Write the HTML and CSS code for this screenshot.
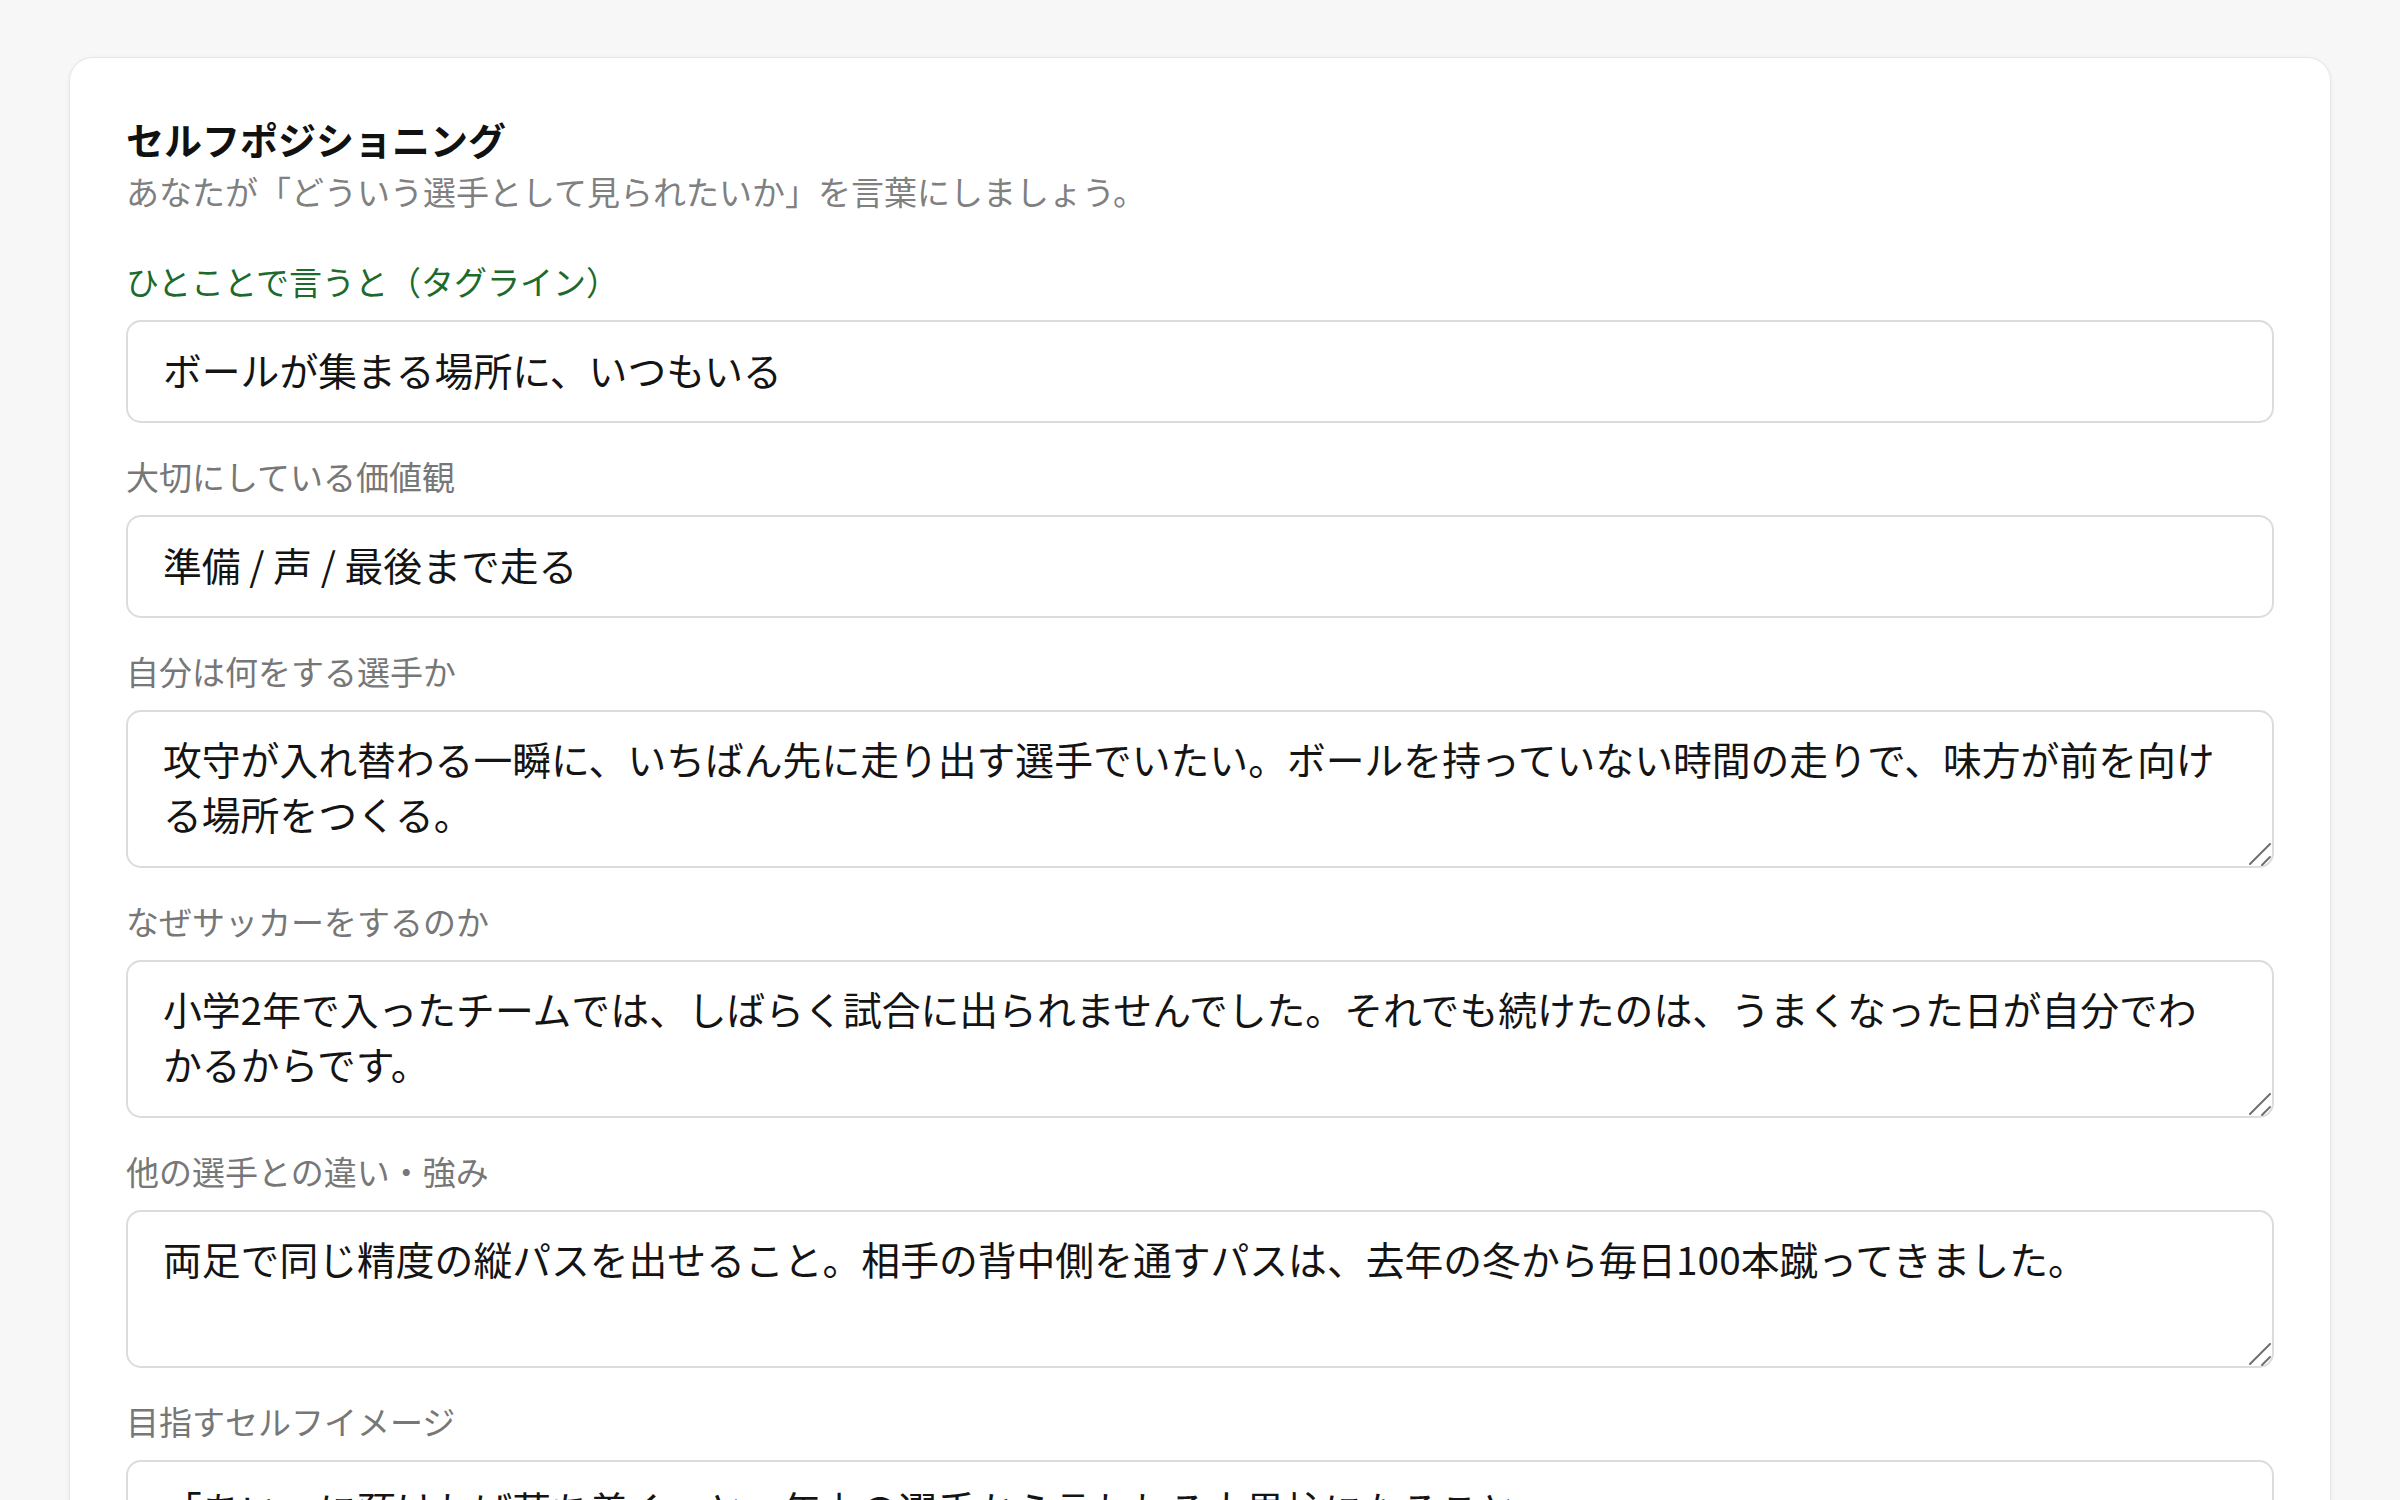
FILE: index.html
```html
<!DOCTYPE html>
<html lang="ja">
<head>
<meta charset="utf-8">
<title>セルフポジショニング</title>
<link rel="stylesheet" href="styles.css">
</head>
<body>
<div class="page">
  <section class="card">
    <h2 class="title">セルフポジショニング</h2>
    <p class="subtitle">あなたが「どういう選手として見られたいか」を言葉にしましょう。</p>

    <div class="field first">
      <label class="label label-active" for="tagline">ひとことで言うと（タグライン）</label>
      <input class="control input" id="tagline" type="text" value="ボールが集まる場所に、いつもいる">
    </div>

    <div class="field">
      <label class="label" for="values">大切にしている価値観</label>
      <input class="control input" id="values" type="text" value="準備 / 声 / 最後まで走る">
    </div>

    <div class="field">
      <label class="label" for="role">自分は何をする選手か</label>
      <div class="area-wrap">
        <textarea class="control area" id="role" rows="2">攻守が入れ替わる一瞬に、いちばん先に走り出す選手でいたい。ボールを持っていない時間の走りで、味方が前を向ける場所をつくる。</textarea>
        <svg class="grip" viewBox="0 0 25 25" aria-hidden="true"><path d="M1 21 L21 1" /><path d="M13 22 L21 14" /></svg>
      </div>
    </div>

    <div class="field">
      <label class="label" for="why">なぜサッカーをするのか</label>
      <div class="area-wrap">
        <textarea class="control area" id="why" rows="2">小学2年で入ったチームでは、しばらく試合に出られませんでした。それでも続けたのは、うまくなった日が自分でわかるからです。</textarea>
        <svg class="grip" viewBox="0 0 25 25" aria-hidden="true"><path d="M1 21 L21 1" /><path d="M13 22 L21 14" /></svg>
      </div>
    </div>

    <div class="field">
      <label class="label" for="diff">他の選手との違い・強み</label>
      <div class="area-wrap">
        <textarea class="control area" id="diff" rows="2">両足で同じ精度の縦パスを出せること。相手の背中側を通すパスは、去年の冬から毎日100本蹴ってきました。</textarea>
        <svg class="grip" viewBox="0 0 25 25" aria-hidden="true"><path d="M1 21 L21 1" /><path d="M13 22 L21 14" /></svg>
      </div>
    </div>

    <div class="field">
      <label class="label" for="image">目指すセルフイメージ</label>
      <div class="area-wrap">
        <textarea class="control area" id="image" rows="2">「あいつに預ければ落ち着く」と、年上の選手から言われる大黒柱になること。</textarea>
        <svg class="grip" viewBox="0 0 25 25" aria-hidden="true"><path d="M1 21 L21 1" /><path d="M13 22 L21 14" /></svg>
      </div>
    </div>
  </section>
</div>
</body>
</html>
```

FILE: styles.css
```css
html, body {
  margin: 0;
  padding: 0;
  background: #f7f7f7;
}

body {
  font-family: "Noto Sans CJK JP", "Noto Sans", sans-serif;
  color: #111111;
}

.page {
  padding: 57px 69px 60px;
}

.card {
  background: #ffffff;
  border: 1px solid #e6e6e6;
  border-radius: 24px;
  box-shadow: 0 1px 5px rgba(0, 0, 0, 0.05);
  padding: 55px 56px 60px;
}

.title {
  margin: 0;
  font-size: 38px;
  line-height: 52px;
  font-weight: 700;
  color: #111111;
}

.subtitle {
  margin: 2px 0 0;
  font-size: 33px;
  line-height: 48px;
  color: #808080;
}

.field {
  margin-top: 32px;
}

.field.first {
  margin-top: 45px;
}

.label {
  display: block;
  font-size: 33px;
  line-height: 48px;
  color: #777777;
  margin: -3px 0 15px;
}

.label-active {
  color: #1d6a2c;
}

.control {
  display: block;
  width: 100%;
  box-sizing: border-box;
  margin: 0;
  border: 2px solid #dcdcdc;
  border-radius: 15px;
  background: #ffffff;
  font-family: "Noto Sans CJK JP", "Noto Sans", sans-serif;
  font-size: 38.8px;
  color: #141414;
  outline: none;
}

.input {
  height: 103px;
  padding: 0 40px 5px 35px;
}

.area-wrap {
  position: relative;
}

.area {
  height: 158px;
  padding: 19px 40px 25px 35px;
  line-height: 55px;
  resize: none;
  overflow: hidden;
}

.grip {
  position: absolute;
  right: 0;
  bottom: 0;
  width: 25px;
  height: 25px;
  pointer-events: none;
  fill: none;
  stroke: #6f6f6f;
  stroke-width: 2;
  stroke-linecap: round;
}
```
